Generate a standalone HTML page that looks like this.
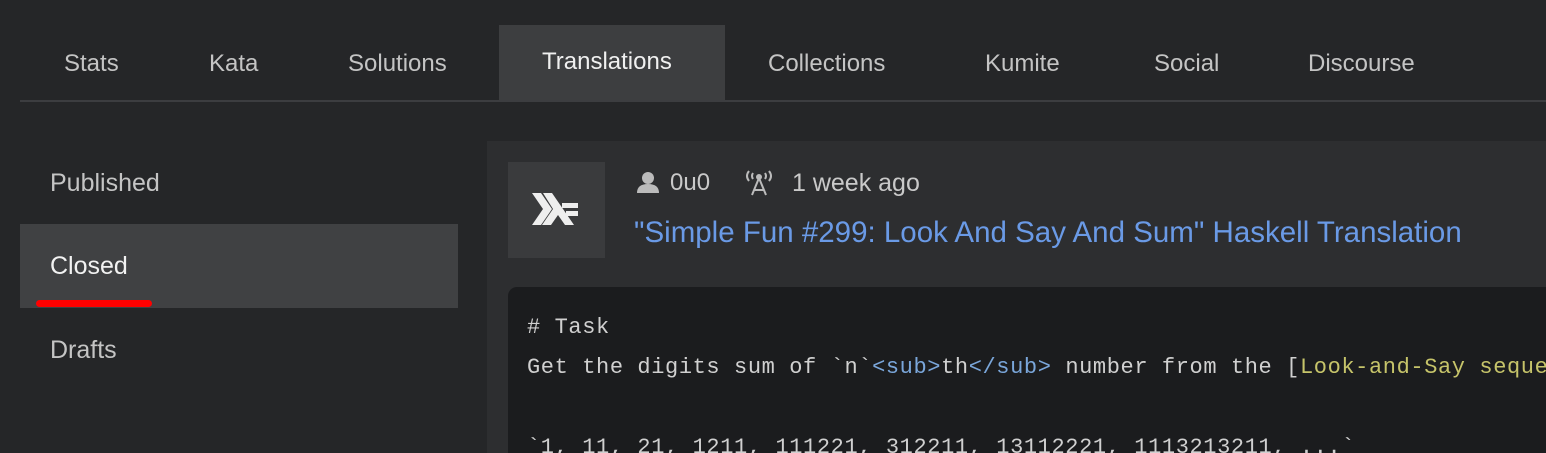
<!DOCTYPE html>
<html><head><style>
*{margin:0;padding:0;box-sizing:border-box}
html,body{width:1546px;height:453px;overflow:hidden}
body{background:#252628;font-family:"Liberation Sans",sans-serif;color:#c9c9c9;position:relative}
.a{position:absolute;white-space:nowrap}
.tab{font-size:24px;top:50px;color:#c4c4c4}
.side{font-size:25px;color:#c4c4c4;left:50px}
.code{font-family:"Liberation Mono",monospace;font-size:22px;letter-spacing:0.6px;color:#d0d0d0;left:527px}
</style></head><body>
<div class="a" style="left:499px;top:25px;width:226px;height:76px;background:#3d3e40"></div>
<div class="a" style="left:20px;top:100px;width:1526px;height:2px;background:#3c3d40"></div>
<div class="a tab" style="left:64px">Stats</div>
<div class="a tab" style="left:209px">Kata</div>
<div class="a tab" style="left:348px">Solutions</div>
<div class="a tab" style="left:542px;top:48px;color:#f0f0f0">Translations</div>
<div class="a tab" style="left:768px">Collections</div>
<div class="a tab" style="left:985px">Kumite</div>
<div class="a tab" style="left:1154px">Social</div>
<div class="a tab" style="left:1308px">Discourse</div>

<div class="a" style="left:20px;top:224px;width:438px;height:84px;background:#404143"></div>
<div class="a" style="left:36px;top:300px;width:116px;height:7px;background:#f00;border-radius:4px"></div>
<div class="a side" style="top:169px">Published</div>
<div class="a side" style="top:252px;color:#f2f2f2">Closed</div>
<div class="a side" style="top:336px">Drafts</div>

<div class="a" style="left:487px;top:141px;width:1059px;height:312px;background:#2d2e30"></div>
<div class="a" style="left:508px;top:162px;width:97px;height:96px;background:#3a3b3d"></div>
<svg class="a" style="left:532px;top:193px" width="48" height="35" viewBox="0 0 48 35">
<polygon points="0,0 9,0 20,16 9,32 0,32 11,16" fill="#eee"/>
<polygon points="11,0 20,0 42,32 33,32 26,22 19,32 10,32 21,16" fill="#eee"/>
<rect x="30" y="10" width="16" height="5" fill="#eee"/><rect x="34" y="18" width="12" height="5" fill="#eee"/>
</svg>
<svg class="a" style="left:636px;top:170px" width="24" height="24" viewBox="0 0 24 24"><circle cx="12" cy="8" r="6" fill="#bbb"/><path d="M1 23 Q1 14 12 14 Q23 14 23 23Z" fill="#bbb"/></svg>
<div class="a" style="left:670px;top:169px;font-size:24px;color:#c9c9c9">0u0</div>
<svg class="a" style="left:744px;top:169px" width="30" height="28" viewBox="0 0 30 28" fill="none" stroke="#bbb" stroke-width="2"><path d="M5 2 Q1 7 5 12M25 2 Q29 7 25 12M9 4 Q7 7 9 10M21 4 Q23 7 21 10"/><circle cx="15" cy="8" r="2" fill="#bbb"/><path d="M15 9 L8 26M15 9 L22 26M10 21 L20 21"/></svg>
<div class="a" style="left:792px;top:169px;font-size:25px;color:#c9c9c9">1 week ago</div>
<div class="a" style="left:634px;top:216px;font-size:29.5px;color:#6a9ae6">"Simple Fun #299: Look And Say And Sum" Haskell Translation</div>

<div class="a" style="left:508px;top:287px;width:1038px;height:166px;background:#1b1c1e;border-radius:9px 0 0 0;overflow:hidden">
<div class="a code" style="left:19px;top:28px"># Task</div>
<div class="a code" style="left:19px;top:68px">Get the digits sum of `n`<span style="color:#7aa6da">&lt;sub&gt;</span>th<span style="color:#7aa6da">&lt;/sub&gt;</span> number from the [<span style="color:#c6c46a">Look-and-Say sequence</span></div>
<div class="a code" style="left:19px;top:148px">`1, 11, 21, 1211, 111221, 312211, 13112221, 1113213211, ...`</div>
</div>
</body></html>
